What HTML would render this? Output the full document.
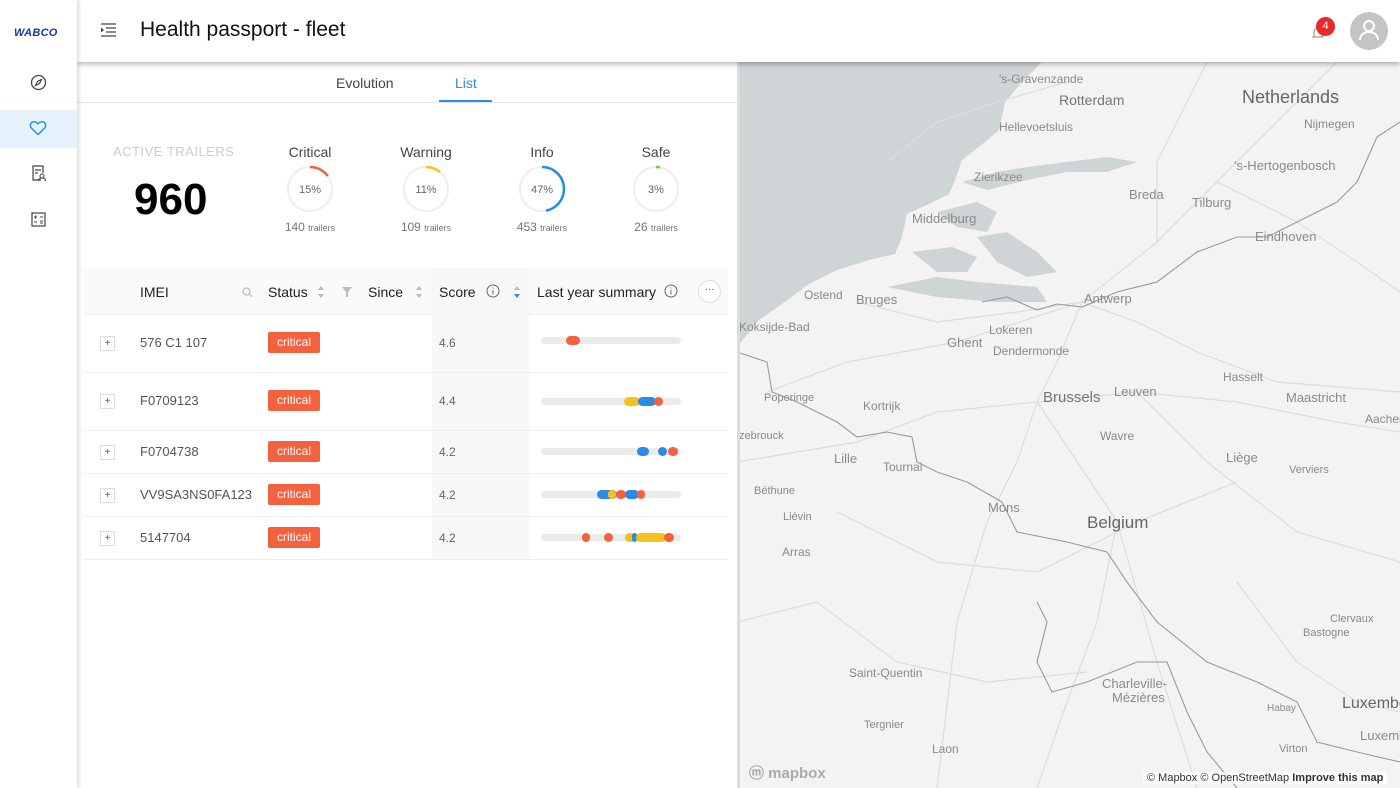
<!DOCTYPE html>
<html><head><meta charset="utf-8">
<style>
*{box-sizing:border-box;margin:0;padding:0}
body{width:1400px;height:788px;overflow:hidden;font-family:"Liberation Sans",sans-serif;background:#fff;position:relative;color:#222}
.side{position:absolute;left:0;top:0;width:77px;height:788px;background:#fff;box-shadow:2px 0 4px rgba(0,0,0,.15);z-index:3}
.hdr{position:absolute;left:77px;top:0;right:0;height:62px;background:#fff;box-shadow:0 2px 5px rgba(0,0,0,.3);z-index:2}
.abs{position:absolute}
.tab{position:absolute;top:75px;font-size:14px;color:#444}
.col{position:absolute;top:144px;width:100px;text-align:center;font-size:14px;color:#444}
.col svg{display:block;margin:4px auto 0}
.col .n{font-size:12px;color:#777;margin-top:6px}
.col .n small{font-size:9px}
.th{position:absolute;top:284px;font-size:14px;color:#222}
.row{position:absolute;left:84px;width:644px;border-bottom:1px solid #eee}
.plus{position:absolute;left:16px;width:15px;height:15px;border:1px solid #ddd;font-size:10px;text-align:center;line-height:13px;color:#555}
.imei{position:absolute;left:56px;font-size:13px;color:#555}
.crit{position:absolute;left:184px;width:52px;height:21px;background:#f5603d;color:#fff;font-size:12px;text-align:center;line-height:21px;border-radius:2px}
.sc{position:absolute;left:355px;font-size:12px;color:#666}
.bar{position:absolute;left:457px;width:140px;height:7px;background:#ebebeb;border-radius:4px}
.d{position:absolute;top:-1px;height:9px;border-radius:5px}
.r{background:#f5603d}.b{background:#2b8ae8}.y{background:#f8c01a}
.ml{position:absolute;font-size:12px;color:#8a8a8a}
.mb{position:absolute;font-size:16px;color:#666}
</style></head><body>
<div class="side">
 <div class="abs" style="left:14px;top:27px;font-size:11px;font-weight:bold;color:#1a3a9c;letter-spacing:.3px;font-style:italic">WABCO</div>
 <svg class="abs" style="left:30px;top:74px" width="17" height="17" viewBox="0 0 17 17"><circle cx="8.5" cy="8.5" r="7" fill="none" stroke="#444" stroke-width="1.3"/><path d="M11.5 5.5L9.5 9.5 5.5 11.5 7.5 7.5z" fill="none" stroke="#444" stroke-width="1.2"/></svg>
 <div class="abs" style="left:0;top:110px;width:77px;height:38px;background:#e6f3fd"></div>
 <svg class="abs" style="left:29px;top:120px" width="18" height="16" viewBox="0 0 18 16"><path d="M9 14.5L2.5 8.2C0.8 6.5 1 3.8 2.8 2.5 4.6 1.2 7.2 1.6 9 3.8 10.8 1.6 13.4 1.2 15.2 2.5 17 3.8 17.2 6.5 15.5 8.2z" fill="none" stroke="#2b8ae8" stroke-width="1.4"/></svg>
 <svg class="abs" style="left:31px;top:165px" width="16" height="17" viewBox="0 0 16 17"><path d="M10 15H2V1h10v7" fill="none" stroke="#444" stroke-width="1.2"/><path d="M4 5h6M4 8h3" stroke="#444" stroke-width="1.2"/><circle cx="11" cy="11" r="2" fill="none" stroke="#444" stroke-width="1.1"/><path d="M7.5 16c0-2 1.5-3 3.5-3s3.5 1 3.5 3" fill="none" stroke="#444" stroke-width="1.1"/></svg>
 <svg class="abs" style="left:31px;top:212px" width="15" height="15" viewBox="0 0 15 15"><rect x="1" y="1" width="13" height="13" fill="none" stroke="#444" stroke-width="1.2"/><path d="M3 5h3M4.5 3.5v3M9 5h3M3 10h3M9 9h3M9 11h3" stroke="#444" stroke-width="1"/></svg>
</div>
<div class="hdr">
 <svg class="abs" style="left:23px;top:23px" width="17" height="14" viewBox="0 0 17 14"><path d="M1 1h15M6 5h10M6 9h10M1 13h15" stroke="#444" stroke-width="1.3"/><path d="M1 4.5l3 2.5-3 2.5z" fill="#444"/></svg>
 <div class="abs" style="left:63px;top:18px;font-size:21px;color:#111">Health passport - fleet</div>
 <svg class="abs" style="left:1235px;top:26px" width="12" height="13" viewBox="0 0 12 13"><path d="M2 10V6a4 4 0 018 0v4l1 1H1z" fill="none" stroke="#888" stroke-width="1"/></svg>
 <div class="abs" style="left:1239px;top:17px;width:19px;height:19px;border-radius:50%;background:#e8282b;color:#fff;font-size:11px;text-align:center;line-height:19px">4</div>
 <div class="abs" style="left:1273px;top:12px;width:38px;height:38px;border-radius:50%;background:#c4c4c4"></div>
 <svg class="abs" style="left:1280px;top:18px" width="24" height="24" viewBox="0 0 24 24"><circle cx="12" cy="8" r="5" fill="none" stroke="#fff" stroke-width="2"/><path d="M3 22c0-5 4-8 9-8s9 3 9 8" fill="none" stroke="#fff" stroke-width="2"/></svg>
</div>
<div class="abs" style="left:77px;top:102px;width:660px;height:1px;background:#e5e5e5"></div>
<div class="tab" style="left:336px">Evolution</div>
<div class="tab" style="left:455px;color:#2b8ae8">List</div>
<div class="abs" style="left:439px;top:100px;width:53px;height:2px;background:#2b8ae8"></div>
<div class="abs" style="left:113px;top:144px;font-size:13px;color:#ccc;letter-spacing:.5px">ACTIVE TRAILERS</div>
<div class="abs" style="left:134px;top:175px;font-size:44px;font-weight:bold;color:#000">960</div>
<div class="col" style="left:260px">Critical<svg width="50" height="50" viewBox="0 0 50 50"><circle cx="25" cy="25" r="22" fill="none" stroke="#eee" stroke-width="2"/><circle cx="25" cy="25" r="22" fill="none" stroke="#f5603d" stroke-width="2.5" stroke-dasharray="20.7 200" transform="rotate(-90 25 25)"/><text x="25" y="29" text-anchor="middle" font-size="11" fill="#666" font-family="Liberation Sans">15%</text></svg><div class="n">140 <small>trailers</small></div></div>
<div class="col" style="left:376px">Warning<svg width="50" height="50" viewBox="0 0 50 50"><circle cx="25" cy="25" r="22" fill="none" stroke="#eee" stroke-width="2"/><circle cx="25" cy="25" r="22" fill="none" stroke="#f8c01a" stroke-width="2.5" stroke-dasharray="15.2 200" transform="rotate(-90 25 25)"/><text x="25" y="29" text-anchor="middle" font-size="11" fill="#666" font-family="Liberation Sans">11%</text></svg><div class="n">109 <small>trailers</small></div></div>
<div class="col" style="left:492px">Info<svg width="50" height="50" viewBox="0 0 50 50"><circle cx="25" cy="25" r="22" fill="none" stroke="#eee" stroke-width="2"/><circle cx="25" cy="25" r="22" fill="none" stroke="#2b8ae8" stroke-width="2.5" stroke-dasharray="65 200" transform="rotate(-90 25 25)"/><text x="25" y="29" text-anchor="middle" font-size="11" fill="#666" font-family="Liberation Sans">47%</text></svg><div class="n">453 <small>trailers</small></div></div>
<div class="col" style="left:606px">Safe<svg width="50" height="50" viewBox="0 0 50 50"><circle cx="25" cy="25" r="22" fill="none" stroke="#eee" stroke-width="2"/><circle cx="25" cy="25" r="22" fill="none" stroke="#7cc84a" stroke-width="2.5" stroke-dasharray="4.2 200" transform="rotate(-90 25 25)"/><text x="25" y="29" text-anchor="middle" font-size="11" fill="#666" font-family="Liberation Sans">3%</text></svg><div class="n">26 <small>trailers</small></div></div>
<div class="abs" style="left:84px;top:268px;width:644px;height:47px;background:#fafafa;border-bottom:1px solid #eee"></div>
<div class="abs" style="left:432px;top:268px;width:97px;height:292px;background:#f7f7f7"></div>
<div class="th" style="left:140px">IMEI</div>
<svg class="abs" style="left:242px;top:287px" width="11" height="11"><circle cx="4.5" cy="4.5" r="3.5" fill="none" stroke="#bbb" stroke-width="1.2"/><path d="M7 7l3 3" stroke="#bbb" stroke-width="1.2"/></svg>
<div class="th" style="left:268px">Status</div>
<svg class="abs" style="left:317px;top:285px" width="8" height="14"><path d="M4 1l3 4H1zM4 13l3-4H1z" fill="#bbb"/></svg>
<svg class="abs" style="left:342px;top:287px" width="10" height="10"><path d="M0 0h10L6 5v5H4V5z" fill="#bbb"/></svg>
<div class="th" style="left:368px">Since</div>
<svg class="abs" style="left:415px;top:285px" width="8" height="14"><path d="M4 1l3 4H1zM4 13l3-4H1z" fill="#bbb"/></svg>
<div class="th" style="left:439px">Score</div>
<svg class="abs" style="left:486px;top:284px" width="14" height="14"><circle cx="7" cy="7" r="6" fill="none" stroke="#666"/><path d="M7 6v4.5M7 3.5v1" stroke="#666"/></svg>
<svg class="abs" style="left:513px;top:285px" width="8" height="14"><path d="M4 1l3 4H1z" fill="#bbb"/><path d="M4 13l3-4H1z" fill="#2b8ae8"/></svg>
<div class="th" style="left:537px">Last year summary</div>
<svg class="abs" style="left:664px;top:284px" width="14" height="14"><circle cx="7" cy="7" r="6" fill="none" stroke="#666"/><path d="M7 6v4.5M7 3.5v1" stroke="#666"/></svg>
<div class="abs" style="left:698px;top:280px;width:23px;height:23px;border:1px solid #ddd;border-radius:50%;background:#fff;font-size:10px;text-align:center;line-height:17px;color:#555">···</div>

<div class="row" style="top:315px;height:58px"><div class="plus" style="top:21px">+</div><div class="imei" style="top:20px">576 C1 107</div><div class="crit" style="top:17px">critical</div><div class="sc" style="top:21px">4.6</div><div class="bar" style="top:22px"><div class="d r" style="left:25px;width:14px"></div></div></div>
<div class="row" style="top:373px;height:58px"><div class="plus" style="top:21px">+</div><div class="imei" style="top:20px">F0709123</div><div class="crit" style="top:17px">critical</div><div class="sc" style="top:21px">4.4</div><div class="bar" style="top:25px"><div class="d y" style="left:83px;width:16px"></div><div class="d b" style="left:97px;width:18px"></div><div class="d r" style="left:113px;width:9px"></div></div></div>
<div class="row" style="top:431px;height:43px"><div class="plus" style="top:14px">+</div><div class="imei" style="top:13px">F0704738</div><div class="crit" style="top:10px">critical</div><div class="sc" style="top:14px">4.2</div><div class="bar" style="top:17px"><div class="d b" style="left:96px;width:12px"></div><div class="d b" style="left:117px;width:9px"></div><div class="d r" style="left:127px;width:10px"></div></div></div>
<div class="row" style="top:474px;height:43px"><div class="plus" style="top:14px">+</div><div class="imei" style="top:13px">VV9SA3NS0FA123</div><div class="crit" style="top:10px">critical</div><div class="sc" style="top:14px">4.2</div><div class="bar" style="top:17px"><div class="d b" style="left:56px;width:20px"></div><div class="d y" style="left:67px;width:8px"></div><div class="d r" style="left:75px;width:10px"></div><div class="d b" style="left:84px;width:14px"></div><div class="d r" style="left:96px;width:8px"></div></div></div>
<div class="row" style="top:517px;height:43px"><div class="plus" style="top:14px">+</div><div class="imei" style="top:13px">5147704</div><div class="crit" style="top:10px">critical</div><div class="sc" style="top:14px">4.2</div><div class="bar" style="top:17px"><div class="d r" style="left:41px;width:8px"></div><div class="d r" style="left:63px;width:9px"></div><div class="d y" style="left:84px;width:10px"></div><div class="d b" style="left:91px;width:5px"></div><div class="d y" style="left:95px;width:30px"></div><div class="d r" style="left:123px;width:10px"></div></div></div>

<div class="abs" style="left:737px;top:62px;width:663px;height:726px;background:#f3f3f3;overflow:hidden">
<svg width="663" height="726" style="position:absolute;left:0;top:0">
<path d="M0 0H305L285 20L268 40L262 68L248 80L225 98L218 118L212 132L192 142L170 152L165 175L158 192L132 198L100 208L72 222L45 242L22 258L0 285Z" fill="#cfd4d7"/>
<path d="M225 120L260 110L290 105L330 100L370 95L400 100L370 110L330 110L290 118L250 128Z M200 150L240 140L260 150L250 170L220 165Z M175 190L215 185L240 195L230 210L200 210Z M240 175L270 170L300 190L320 210L290 215L260 200Z M150 225L200 215L240 220L300 225L310 240L260 240L200 235Z" fill="#cfd4d7"/>
<g fill="none" stroke="#dcdcdc" stroke-width="1.2">
<path d="M120 240L200 260L280 250L345 240L400 260L460 290L540 320L663 330"/>
<path d="M345 240L320 300L300 340L280 400L250 460L220 560L200 726"/>
<path d="M30 330L110 300L220 280L345 240L420 180L480 120L540 60L600 0"/>
<path d="M0 400L120 380L200 350L300 340L400 330L500 340L600 360L663 370"/>
<path d="M300 340L380 460L420 600L460 726"/>
<path d="M400 330L470 400L560 470L663 500"/>
<path d="M100 450L200 500L300 510L400 460L500 420"/>
<path d="M380 460L360 560L330 640L300 726"/>
<path d="M420 180L420 100L450 40L470 0"/>
<path d="M480 120L560 160L620 200L663 230"/>
<path d="M0 560L80 540L160 600L250 620L350 610"/>
<path d="M500 520L560 600L620 640L663 650"/>
<path d="M150 100L200 60L260 40L330 20"/>
</g>
<g fill="none" stroke="#9a9a9a" stroke-width="1.1">
<path d="M0 290L30 300L35 330L60 340L100 360L120 375L150 370L175 375L180 400L200 410L230 420L265 440L280 470L330 480L370 490L390 520L420 560L470 600L520 620L560 640L580 680L620 690L663 700"/>
<path d="M245 240L270 235L300 248L320 242L345 245L380 230L420 220L460 190L500 175L530 175L560 160L600 140L620 120L640 75L663 60"/>
<path d="M300 540L310 560L300 600L315 630L350 620L400 600L430 600L450 650L470 690L500 726"/>
</g>
</svg>
<div class="mb" style="left:505px;top:25px;font-size:18px">Netherlands</div>
<div class="ml" style="left:262px;top:10px">'s-Gravenzande</div>
<div class="ml" style="left:322px;top:30px;font-size:14px;color:#777">Rotterdam</div>
<div class="ml" style="left:262px;top:58px">Hellevoetsluis</div>
<div class="ml" style="left:567px;top:55px">Nijmegen</div>
<div class="ml" style="left:497px;top:96px;font-size:13px">'s-Hertogenbosch</div>
<div class="ml" style="left:237px;top:108px">Zierikzee</div>
<div class="ml" style="left:392px;top:125px;font-size:13px">Breda</div>
<div class="ml" style="left:455px;top:133px;font-size:13px">Tilburg</div>
<div class="ml" style="left:175px;top:149px;font-size:13px">Middelburg</div>
<div class="ml" style="left:518px;top:167px;font-size:13px">Eindhoven</div>
<div class="ml" style="left:67px;top:226px">Ostend</div>
<div class="ml" style="left:119px;top:230px;font-size:13px">Bruges</div>
<div class="ml" style="left:347px;top:229px;font-size:13px">Antwerp</div>
<div class="ml" style="left:2px;top:258px">Koksijde-Bad</div>
<div class="ml" style="left:252px;top:261px">Lokeren</div>
<div class="ml" style="left:210px;top:273px;font-size:13px">Ghent</div>
<div class="ml" style="left:256px;top:282px">Dendermonde</div>
<div class="ml" style="left:306px;top:327px;font-size:15px;color:#777">Brussels</div>
<div class="ml" style="left:377px;top:322px;font-size:13px">Leuven</div>
<div class="ml" style="left:486px;top:308px">Hasselt</div>
<div class="ml" style="left:549px;top:328px;font-size:13px">Maastricht</div>
<div class="ml" style="left:27px;top:330px;font-size:11px">Poperinge</div>
<div class="ml" style="left:126px;top:337px">Kortrijk</div>
<div class="ml" style="left:628px;top:350px">Aachen</div>
<div class="ml" style="left:2px;top:368px;font-size:11px">zebrouck</div>
<div class="ml" style="left:363px;top:367px">Wavre</div>
<div class="ml" style="left:97px;top:389px;font-size:13px">Lille</div>
<div class="ml" style="left:146px;top:398px">Tournai</div>
<div class="ml" style="left:489px;top:388px;font-size:13px">Liège</div>
<div class="ml" style="left:552px;top:402px;font-size:11px">Verviers</div>
<div class="ml" style="left:17px;top:423px;font-size:11px">Béthune</div>
<div class="ml" style="left:251px;top:438px;font-size:13px">Mons</div>
<div class="ml" style="left:350px;top:451px;font-size:17px;color:#666">Belgium</div>
<div class="ml" style="left:46px;top:449px;font-size:11px">Liévin</div>
<div class="ml" style="left:45px;top:483px">Arras</div>
<div class="ml" style="left:593px;top:551px;font-size:11px">Clervaux</div>
<div class="ml" style="left:566px;top:565px;font-size:11px">Bastogne</div>
<div class="ml" style="left:112px;top:604px">Saint-Quentin</div>
<div class="ml" style="left:365px;top:614px;font-size:13px">Charleville-</div>
<div class="ml" style="left:375px;top:628px;font-size:13px">Mézières</div>
<div class="ml" style="left:530px;top:641px;font-size:10px">Habay</div>
<div class="ml" style="left:605px;top:633px;font-size:16px;color:#666">Luxembo</div>
<div class="ml" style="left:623px;top:666px;font-size:13px">Luxembo</div>
<div class="ml" style="left:127px;top:657px;font-size:11px">Tergnier</div>
<div class="ml" style="left:195px;top:680px">Laon</div>
<div class="ml" style="left:542px;top:681px;font-size:11px">Virton</div>
<div class="ml" style="left:12px;top:700px;font-size:15px;color:#aaa;font-weight:bold">ⓜ mapbox</div>
<div class="ml" style="left:406px;top:710px;font-size:11px;color:#333;background:rgba(255,255,255,.7);padding:0 4px">© Mapbox © OpenStreetMap <b>Improve this map</b></div>
</div>
<div class="abs" style="left:737px;top:62px;width:3px;height:726px;background:#ddd"></div>
</body></html>
